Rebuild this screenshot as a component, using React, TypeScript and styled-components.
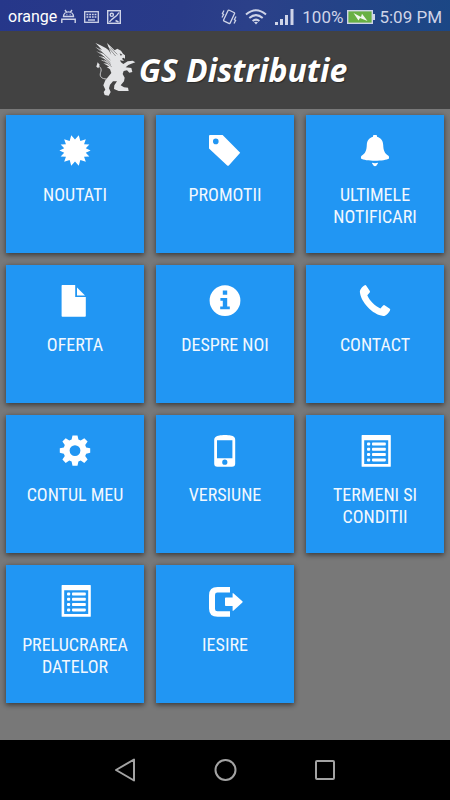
import React from "react";
import styled, { createGlobalStyle } from "styled-components";

const GlobalStyle = createGlobalStyle`
  *, *::before, *::after { box-sizing: border-box; }
  body { margin: 0; background: #787878; font-family: Roboto, "Liberation Sans", sans-serif; }
`;

const Screen = styled.div`
  display: flex;
  flex-direction: column;
  min-height: 100vh;
  background: #787878;
`;

const StatusBar = styled.div`
  display: flex;
  align-items: center;
  justify-content: space-between;
  height: 31px;
  padding: 2px 8px 0;
  background: linear-gradient(100deg, #26378a 0%, #293b88 40%, #2b4089 55%, #1b4785 100%);
  color: #cfd4e8;
`;

const StatusGroup = styled.div<{ $gap: number }>`
  display: flex;
  align-items: center;
  gap: ${(p) => p.$gap}px;
`;

const Carrier = styled.span`
  color: #ffffff;
  font-size: 16px;
  line-height: 20px;
`;

const StatusText = styled.span`
  font-size: 17px;
  line-height: 20px;
  white-space: nowrap;
`;

const Header = styled.header`
  display: flex;
  align-items: center;
  justify-content: center;
  height: 78px;
  padding-right: 10px;
  background: #424242;
`;

const Brand = styled.h1`
  margin: 0;
  color: #ffffff;
  font-family: "Open Sans", "Noto Sans", sans-serif;
  font-size: 32px;
  font-style: italic;
  font-weight: 700;
  line-height: 40px;
  white-space: nowrap;
  text-shadow: 1px 1px 1px #2a2a2a;
`;

const Menu = styled.main`
  display: grid;
  flex: 1;
  grid-template-columns: repeat(3, 1fr);
  align-content: start;
  gap: 12px;
  padding: 6px;
`;

const Tile = styled.button`
  display: flex;
  flex-direction: column;
  align-items: center;
  gap: 16px;
  aspect-ratio: 1;
  min-width: 0;
  padding: 19px 8px 0;
  border: 0;
  background: #2196f3;
  box-shadow: 0 2px 5px rgba(0, 0, 0, 0.4), 0 1px 6px rgba(0, 0, 0, 0.2);
  color: #ffffff;
  cursor: pointer;
`;

const TileLabel = styled.span`
  color: #f2f8fe;
  font-family: "Roboto Condensed", "Liberation Sans Narrow", Roboto, sans-serif;
  font-size: 18px;
  line-height: 22px;
  text-align: center;
`;

const NavBar = styled.nav`
  display: flex;
  align-items: center;
  justify-content: center;
  gap: 60px;
  height: 60px;
  background: #000000;
`;

const NavButton = styled.button`
  display: flex;
  align-items: center;
  justify-content: center;
  width: 40px;
  height: 40px;
  padding: 0;
  border: 0;
  background: transparent;
  color: #a3a3a3;
  cursor: pointer;
`;

const Glyph = ({ children }: { children: React.ReactNode }) => (
  <svg width="34" height="34" viewBox="0 0 34 34" fill="currentColor" aria-hidden="true">
    {children}
  </svg>
);

const burst = [14, 44, 67, 90, 113, 136, 166, 194, 224, 247, 270, 293, 316, 346];
const burstPoints = burst
  .flatMap((a, i) => {
    const next = i === burst.length - 1 ? burst[0] + 360 : burst[i + 1];
    const at = (deg: number, r: number) => {
      const t = (deg * Math.PI) / 180;
      return `${(17 + r * Math.sin(t)).toFixed(2)},${(16.5 - r * Math.cos(t)).toFixed(2)}`;
    };
    return [at(a, 15.6), at((a + next) / 2, 11)];
  })
  .join(" ");

const Certificate = () => (
  <Glyph>
    <polygon points={burstPoints} />
  </Glyph>
);

const Tag = () => (
  <Glyph>
    <path
      fillRule="evenodd"
      d="M2 1H14.6L32.2 18.7L20.8 31.4Q20 32.2 19.2 31.4L1 14.6V2Q1 1 2 1ZM7.8 4.6A2.8 2.8 0 1 0 7.8 10.2A2.8 2.8 0 1 0 7.8 4.6Z"
    />
  </Glyph>
);

const Bell = () => (
  <Glyph>
    <path d="M15 1.8Q15 1 16 1H18Q19 1 19 1.8V2.8C23 3.8 25 7 25.2 11C25.4 16 26.4 19.4 30.4 21.8Q31.4 22.6 31 24.4C27 27.4 7 27.4 3 24.4Q2.6 22.6 3.6 21.8C7.6 19.4 8.6 16 8.8 11C9 7 11 3.8 15 2.8Z" />
    <path d="M14 28.8Q17 29.6 20 28.8C20 30.4 18.8 30.6 18.6 31.4Q17 33 15.4 31.4C15.2 30.6 14 30.4 14 28.8Z" />
  </Glyph>
);

const FileIcon = () => (
  <Glyph>
    <path d="M4.2 1H17.2V13H27.8V32Q27.8 32.8 27 32.8H4.4Q3.6 32.8 3.6 32V1.8Q3.6 1 4.2 1Z" />
    <path d="M19 3.6L27 11.6H19Z" />
  </Glyph>
);

const Info = () => (
  <Glyph>
    <path
      fillRule="evenodd"
      d="M17 1.2A15.4 15.4 0 1 0 17 32A15.4 15.4 0 1 0 17 1.2ZM14.8 6.6H19.2V10.8H14.8ZM12.4 14H19.2V22.4H21.8V25.2H12.2V22.4H14.8V16.8H12.4Z"
    />
  </Glyph>
);

const Phone = () => (
  <Glyph>
    <path d="M6.8 1.3Q7.6 .8 8.3 1.7L11.8 7Q12.3 7.8 11.7 8.5L9.3 11.2C11.5 16.5 16.5 21.6 22.4 24.5L25.1 21.6Q25.8 20.8 26.6 21.3L31.8 24.8Q32.6 25.4 32 26.4C30.4 29.4 27.6 32.2 25.2 31.9C14.5 30.7 2.9 18 1.9 8.2C1.6 5.5 4.4 2.7 6.8 1.3Z" />
  </Glyph>
);

const Gear = () => (
  <Glyph>
    <path
      fillRule="evenodd"
      d="M14.5 1.4H19.5L20.4 5.5L22.7 6.5L26.3 4.2L29.6 7.5L27.2 11.1L28.2 13.4L32.2 14.2V18.8L28.2 19.7L27.2 22L29.6 25.6L26.3 28.9L22.7 26.5L20.4 27.5L19.5 31.8H14.5L13.6 27.5L11.3 26.5L7.7 28.9L4.4 25.6L6.8 22L5.8 19.7L1.8 18.8V14.2L5.8 13.4L6.8 11.1L4.4 7.5L7.7 4.2L11.3 6.5L13.6 5.5ZM17 11.2A5.4 5.4 0 1 0 17 22A5.4 5.4 0 1 0 17 11.2Z"
    />
  </Glyph>
);

const Mobile = () => (
  <Glyph>
    <path
      fillRule="evenodd"
      d="M11.4 1.5C14 .8 20 .8 22.6 1.5C26 2 27.2 3.6 27.2 5.8V29.6Q27.2 32.8 24 32.8H9.4Q6.2 32.8 6.2 29.6V5.8C6.2 3.6 8 2 11.4 1.5ZM9 6.2V24.2H24.4V6.2ZM16.8 25.6A2.6 2.6 0 1 0 16.8 30.8A2.6 2.6 0 1 0 16.8 25.6Z"
    />
  </Glyph>
);

const ListAlt = () => (
  <Glyph>
    <path
      fillRule="evenodd"
      d="M4.2 1H32.2Q32.8 1 32.8 1.6V32.2Q32.8 32.8 32.2 32.8H4.2Q3.6 32.8 3.6 32.2V1.6Q3.6 1 4.2 1ZM6.2 6.2V30H30.2V6.2Z"
    />
    {[8.6, 13.8, 19, 24.4].map((y) => (
      <g key={y}>
        <rect x="9" y={y} width="3.2" height="3" rx="1" />
        <rect x="14" y={y} width="13.8" height="3" rx=".8" />
      </g>
    ))}
  </Glyph>
);

const LogOut = () => (
  <svg width="34" height="34" viewBox="0 0 34 34" fill="currentColor" aria-hidden="true" overflow="visible">
    <path d="M9.6 3H22V8.6H9.4Q7 8.6 7 11V25Q7 27.2 9.4 27.2H22V32.8H9.6Q1 32.8 1 24.4V11.4Q1 3 9.6 3Z" />
    <path d="M17.8 13.4H24.6V9.8Q24.6 8.6 25.6 9.4L34.4 17.3Q35 17.9 34.4 18.5L25.6 26.6Q24.6 27.4 24.6 26.2V22H17.8Q17 22 17 21.2V14.2Q17 13.4 17.8 13.4Z" />
  </svg>
);

const Griffin = () => (
  <svg width="46" height="64" viewBox="15 3 138 192" fill="#e3e4e6" aria-hidden="true">
    <path d="M22 17C31 23 52 29 63 41L70 54L57 18L80 40L88 35L99 41L105 50L111 55L111 65L106 62L102 65L108 72L96 70L99 76L106 81L119 73L134 71L142 76L130 80L121 84L113 91L130 93L133 105L124 107L117 100L107 102L104 111L110 122L108 133L98 145L108 151L120 152L122 162L92 162L78 156L79 145L87 133L75 133L66 143L63 154L68 165L62 176L50 174L47 165L52 158L46 145L52 130L62 118L70 108L66 97L56 90L64 89L46 79L60 80L38 68L56 71L31 56L51 61L25 43L47 50L22 30L42 39Z" />
    <path d="M25 29L67 69M28 42L67 77M36 57L69 83M44 69L71 89M60 30L83 57M67 32L88 52" fill="none" stroke="#424242" strokeWidth="1.5" />
    <path d="M95 49L103 53L98 56Z" fill="#424242" />
    <path d="M56 126C42 126 33 119 38 106C42 96 37 88 29 87" fill="none" stroke="#c9cacc" strokeWidth="3" />
    <path d="M25 89L29 76L35 83L31 94Z" />
  </svg>
);

const AndroidIcon = () => (
  <svg width="15" height="15" viewBox="0 0 15 15" fill="none" stroke="currentColor" strokeWidth="1.4" aria-hidden="true">
    <path d="M2.5 7.5A5 4.6 0 0 1 12.5 7.5ZM4 1L5.5 3.2M11 1L9.5 3.2M.8 14V10.2H14.2V14M5.5 5.5H6.3M8.7 5.5H9.5" />
  </svg>
);

const KeyboardIcon = () => (
  <svg width="15" height="12" viewBox="0 0 15 12" fill="none" stroke="currentColor" aria-hidden="true">
    <rect x=".7" y=".7" width="13.6" height="10.6" strokeWidth="1.3" />
    <path d="M2.5 3.5H12.5M2.5 6H12.5" strokeWidth="1.6" strokeDasharray="1.8 .9" />
    <path d="M4 9H11" strokeWidth="1.4" />
  </svg>
);

const PictureIcon = () => (
  <svg width="14" height="14" viewBox="0 0 14 14" fill="none" stroke="currentColor" strokeWidth="1.4" aria-hidden="true">
    <rect x=".7" y=".7" width="12.6" height="12.6" />
    <circle cx="4.8" cy="4.8" r="1.6" />
    <path d="M2.5 12C5 7.5 9 8 12 2.5M8.5 10.5L11.5 12" />
  </svg>
);

const VibrateIcon = () => (
  <svg width="16" height="16" viewBox="0 0 16 16" fill="none" stroke="currentColor" strokeWidth="1.3" aria-hidden="true">
    <rect x="4.4" y="1.8" width="7.2" height="12" rx="1" transform="rotate(25 8 8)" />
    <path d="M3 1.5L1.4 4.5L2.6 5.5L1 8.5M15 7.5L13.4 10.5L14.6 11.5L13 14.5" />
  </svg>
);

const WifiIcon = () => (
  <svg width="22" height="16" viewBox="0 0 22 16" fill="none" stroke="currentColor" strokeWidth="2" aria-hidden="true">
    <path d="M1 5.5Q11 -3 21 5.5M4.3 9Q11 3.3 17.7 9M7.6 12Q11 9.3 14.4 12" />
    <path d="M9 13.3Q11 12 13 13.3L11 15.6Z" fill="currentColor" stroke="none" />
  </svg>
);

const SignalIcon = () => (
  <svg width="19" height="16" viewBox="0 0 19 16" fill="currentColor" aria-hidden="true">
    <path d="M0 13H3V16H0ZM5 10H8V16H5ZM10 6H13V16H10ZM15.5 0H18.5V16H15.5Z" />
  </svg>
);

const BatteryIcon = () => (
  <svg width="28" height="14" viewBox="0 0 28 14" aria-hidden="true">
    <rect x=".7" y=".7" width="24.6" height="12.6" fill="#68b044" stroke="currentColor" strokeWidth="1.4" />
    <path d="M26 4H28V10H26Z" fill="currentColor" />
    <path d="M6.5 3L14 7L15 3.8L20.5 11L13 8L11.5 10.5Z" fill="#f2f7ef" />
  </svg>
);

const items: { label: string; icon: React.ComponentType }[] = [
  { label: "NOUTATI", icon: Certificate },
  { label: "PROMOTII", icon: Tag },
  { label: "ULTIMELE NOTIFICARI", icon: Bell },
  { label: "OFERTA", icon: FileIcon },
  { label: "DESPRE NOI", icon: Info },
  { label: "CONTACT", icon: Phone },
  { label: "CONTUL MEU", icon: Gear },
  { label: "VERSIUNE", icon: Mobile },
  { label: "TERMENI SI CONDITII", icon: ListAlt },
  { label: "PRELUCRAREA DATELOR", icon: ListAlt },
  { label: "IESIRE", icon: LogOut },
];

export default function App() {
  return (
    <>
      <GlobalStyle />
      <Screen>
        <StatusBar>
          <StatusGroup $gap={8}>
            <StatusGroup $gap={4}>
              <Carrier>orange</Carrier>
              <AndroidIcon />
            </StatusGroup>
            <KeyboardIcon />
            <PictureIcon />
          </StatusGroup>
          <StatusGroup $gap={8}>
            <VibrateIcon />
            <WifiIcon />
            <SignalIcon />
            <StatusGroup $gap={4}>
              <StatusText>100%</StatusText>
              <BatteryIcon />
              <StatusText>5:09 PM</StatusText>
            </StatusGroup>
          </StatusGroup>
        </StatusBar>
        <Header>
          <Griffin />
          <Brand>GS Distributie</Brand>
        </Header>
        <Menu>
          {items.map(({ label, icon: Icon }) => (
            <Tile key={label} type="button">
              <Icon />
              <TileLabel>{label}</TileLabel>
            </Tile>
          ))}
        </Menu>
        <NavBar>
          <NavButton type="button" aria-label="Back">
            <svg width="24" height="26" viewBox="0 0 24 26" fill="none" stroke="currentColor" strokeWidth="2" strokeLinejoin="round">
              <path d="M21 2.5V23.5L3 13Z" />
            </svg>
          </NavButton>
          <NavButton type="button" aria-label="Home">
            <svg width="24" height="24" viewBox="0 0 24 24" fill="none" stroke="currentColor" strokeWidth="2">
              <circle cx="12.5" cy="12" r="10" />
            </svg>
          </NavButton>
          <NavButton type="button" aria-label="Recent apps">
            <svg width="22" height="22" viewBox="0 0 22 22" fill="none" stroke="currentColor" strokeWidth="2">
              <rect x="2" y="2" width="18" height="18" rx="1" />
            </svg>
          </NavButton>
        </NavBar>
      </Screen>
    </>
  );
}
